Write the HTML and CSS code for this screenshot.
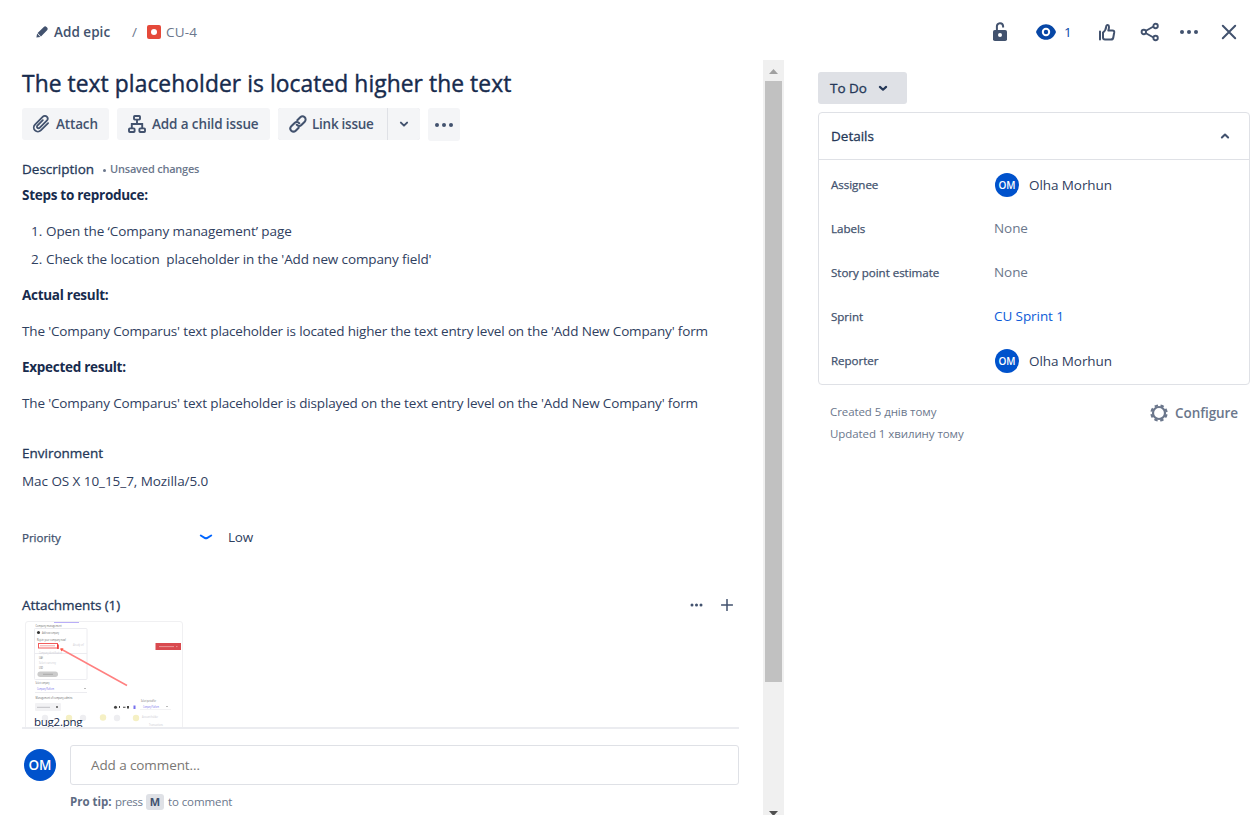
FILE: index.html
```html
<!DOCTYPE html>
<html lang="en">
<head>
<meta charset="utf-8">
<title>CU-4</title>
<link rel="stylesheet" href="styles.css">
</head>
<body>
<div class="issue">
  <header class="topbar">
    <nav class="crumbs">
      <svg class="pencil" width="12" height="12" viewBox="0 0 12 12"><path d="M.4 11.6 1.100 7.600 4.400 10.900zM1.600 7 7.800.9Q9.200-.3 10.500.9l.6.600Q12.300 2.800 11.100 4.200L5 10.400z" fill="#42526e"/></svg>
      <span class="epic">Add epic</span>
      <span class="slash">/</span>
      <span class="bug"></span>
      <span class="key">CU-4</span>
    </nav>
    <div class="actions">
      <svg class="lock" width="16" height="20" viewBox="0 0 16 20"><path d="M4.900 9V4.500a3.100 3.100 0 0 1 6.200-.4V5.600" fill="none" stroke="#42526e" stroke-width="2"/><rect x="1" y="8" width="14" height="11" rx="1.800" fill="#42526e"/><circle cx="8" cy="13" r="2" fill="#fff"/></svg>
      <svg class="eye" width="20" height="16" viewBox="0 0 20 16"><path d="M0 8C1.800 3 5.500.2 10 .2S18.200 3 20 8c-1.800 5-5.500 7.800-10 7.800S1.800 13 0 8z" fill="#0747a6"/><circle cx="10" cy="8" r="3.200" fill="none" stroke="#fff" stroke-width="2"/></svg>
      <span class="watchers">1</span>
      <svg class="thumb-up" width="18" height="18" viewBox="0 0 18 18"><path d="M2 8.500v8M5 9.500C7 8 8 6 8.200 3.500 8.300 1.500 11 1.500 11 4c0 1.400-.3 2.300-.7 3.500H14.500q2 0 1.700 2l-.9 5q-.3 2-2.300 2H7q-2 0-2-2z" fill="none" stroke="#42526e" stroke-width="2" stroke-linejoin="round" stroke-linecap="round"/></svg>
      <svg class="share" width="20" height="20" viewBox="0 0 20 20"><g fill="none" stroke="#42526e" stroke-width="1.900"><path d="m5.500 9 8-4.500M5.500 11l8 4.500"/><circle cx="3.800" cy="10" r="2.200"/><circle cx="15.600" cy="4" r="2.200"/><circle cx="15.600" cy="16" r="2.200"/></g></svg>
      <svg class="more" width="18" height="6" viewBox="0 0 18 6"><g fill="#42526e"><circle cx="2" cy="3" r="2"/><circle cx="9" cy="3" r="2"/><circle cx="16" cy="3" r="2"/></g></svg>
      <svg class="close" width="16" height="16" viewBox="0 0 16 16"><path d="m1.800 1.800 12.400 12.400m0-12.400L1.800 14.200" stroke="#42526e" stroke-width="2" stroke-linecap="round"/></svg>
    </div>
  </header>

  <div class="body">
    <main class="main">
      <h1 class="title">The text placeholder is located higher the text</h1>
      <div class="buttons">
        <div class="btn attach">
          <svg width="18" height="18" viewBox="0 0 18 18"><path d="M10.800 5.200 5.400 10.600a1.500 1.500 0 0 0 2.200 2.200L14.800 5.600a2.700 2.700 0 0 0-3.900-3.900L3 9.600a4.100 4.100 0 0 0 5.800 5.800l7.300-7.300" fill="none" stroke="#42526e" stroke-width="1.800" stroke-linecap="round"/></svg>
          <span>Attach</span>
        </div>
        <div class="btn child">
          <svg width="18" height="18" viewBox="0 0 18 18"><g fill="none" stroke="#42526e" stroke-width="1.900"><rect x="6" y="1" width="6" height="3.600" rx=".8"/><rect x="1" y="13.400" width="5.600" height="3.600" rx=".8"/><rect x="11.400" y="13.400" width="5.600" height="3.600" rx=".8"/><path d="M9 5v4M3.800 13V9h10.400v4"/></g></svg>
          <span>Add a child issue</span>
        </div>
        <div class="split">
          <div class="btn link">
            <svg width="18" height="18" viewBox="0 0 18 18"><g fill="none" stroke="#42526e" stroke-width="2" stroke-linecap="round"><path d="m8.300 5.300 3-3a3.100 3.100 0 0 1 4.400 4.400l-3.300 3.300a3.100 3.100 0 0 1-4.700-.3"/><path d="m9.700 12.700-3 3a3.100 3.100 0 0 1-4.400-4.400L5.600 8a3.100 3.100 0 0 1 4.700.3"/></g></svg>
            <span>Link issue</span>
          </div>
          <div class="btn caret"><svg width="10" height="8" viewBox="0 0 10 8"><path d="m1.900 2.600 3.100 3 3.100-3" fill="none" stroke="#42526e" stroke-width="2" stroke-linecap="round" stroke-linejoin="round"/></svg></div>
        </div>
        <div class="btn dots"><svg width="18" height="6" viewBox="0 0 18 6"><g fill="#42526e"><circle cx="2" cy="3" r="2"/><circle cx="9" cy="3" r="2"/><circle cx="16" cy="3" r="2"/></g></svg></div>
      </div>

      <div class="line desc"><span class="heading">Description</span><span class="dot"></span><span class="unsaved">Unsaved changes</span></div>
      <div class="line strong steps">Steps to reproduce:</div>
      <ol class="list">
        <li class="line"><span class="num">1.</span><span class="li1">Open the ‘Company management’ page</span></li>
        <li class="line"><span class="num">2.</span><span class="li2">Check the location&nbsp; placeholder in the 'Add new company field'</span></li>
      </ol>
      <div class="line strong block">Actual result:</div>
      <div class="line block"><span class="para">The 'Company Comparus' text placeholder is located higher the text entry level on the 'Add New Company' form</span></div>
      <div class="line strong block">Expected result:</div>
      <div class="line block"><span class="para">The 'Company Comparus' text placeholder is displayed on the text entry level on the 'Add New Company' form</span></div>
      <div class="line env"><span class="heading">Environment</span></div>
      <div class="line mac"><span>Mac OS X 10_15_7, Mozilla/5.0</span></div>
      <div class="line priority">
        <span class="label">Priority</span>
        <svg width="14" height="8" viewBox="0 0 14 8"><path d="M1.800 2.500 6 5q1 .5 2 0l4.200-2.500" fill="none" stroke="#0065ff" stroke-width="2" stroke-linecap="round"/></svg>
        <span class="low">Low</span>
      </div>
      <div class="line attachments">
        <span class="heading">Attachments (1)</span>
        <svg class="mini" width="13" height="4" viewBox="0 0 13 4"><g fill="#42526e"><circle cx="2" cy="2" r="1.500"/><circle cx="6.500" cy="2" r="1.500"/><circle cx="11" cy="2" r="1.500"/></g></svg>
        <svg width="12" height="12" viewBox="0 0 12 12"><path d="M6 .5v11M.5 6h11" stroke="#42526e" stroke-width="1.500" stroke-linecap="round"/></svg>
      </div>
      <div class="shelf">
        <div class="card">
          <svg class="preview" width="158" height="106" viewBox="25 621 158 106">
            <path d="M54 622.500h25" stroke="#b9aef8"/>
            <g fill="none" stroke="#ececf0"><rect x="34.500" y="628.500" width="52.500" height="51" rx="1"/><path d="M35 692.500h52M35 653.500h52"/></g>
            <g class="tiny">
              <text x="35.500" y="626.500" textLength="26" lengthAdjust="spacingAndGlyphs">Company management</text>
              <text x="42" y="634" textLength="17" lengthAdjust="spacingAndGlyphs">Add new company</text>
              <text x="37" y="640.500" textLength="29" lengthAdjust="spacingAndGlyphs">Rejoin your company now!</text>
              <text x="39" y="659" textLength="4" lengthAdjust="spacingAndGlyphs">UAH</text>
              <text x="39" y="669" textLength="4" lengthAdjust="spacingAndGlyphs">USD</text>
              <text x="35.500" y="684" textLength="14" lengthAdjust="spacingAndGlyphs">Select company</text>
              <text x="35.500" y="699" textLength="37" lengthAdjust="spacingAndGlyphs">Management of company admins</text>
              <text x="141" y="702" textLength="15" lengthAdjust="spacingAndGlyphs">Select period for</text>
              <g class="faint"><text x="39" y="653.500" textLength="23" lengthAdjust="spacingAndGlyphs">Company identification</text><text x="39" y="664" textLength="17" lengthAdjust="spacingAndGlyphs">Select currency</text><text x="73" y="646" textLength="11" lengthAdjust="spacingAndGlyphs">Already on?</text><text x="142" y="718" textLength="16" lengthAdjust="spacingAndGlyphs">Account holder</text><text x="149" y="726" textLength="14" lengthAdjust="spacingAndGlyphs">Transactions</text></g>
              <g class="violet"><text x="37" y="690" textLength="17" lengthAdjust="spacingAndGlyphs">Company Platform</text><text x="143" y="708" textLength="16" lengthAdjust="spacingAndGlyphs">Company Platform</text></g>
            </g>
            <circle cx="38.500" cy="632.500" r="1.500" fill="#333"/>
            <rect x="38.500" y="643.500" width="19" height="4.500" fill="#fff" stroke="#f25c5c"/>
            <path d="M40 645.800h15" stroke="#efaaaa"/>
            <path d="M58 644.500v4.500" stroke="#ee2d2d" stroke-width="1.500"/>
            <path d="m61 649 66 36.500" stroke="#ff8080" stroke-width="1.500"/><path d="m60 648.500 3.500-.2-2 3.200z" fill="#f54"/>
            <rect x="155.500" y="643" width="25.500" height="7" fill="#d94a4f"/><path d="M159 646.600h15M176 646.600h1.500" stroke="#eb9598"/>
            <rect x="37.500" y="671.500" width="20.500" height="5.500" rx="2.700" fill="#cbcbcb"/><path d="M43 674.300h10" stroke="#aaa"/>
            <rect x="35" y="703" width="26" height="8" rx="1" fill="#f2f2f4"/><path d="M37 707.300h13" stroke="#c0c0c5"/><path d="M56 707h2" stroke="#555" stroke-width="1.500"/>
            <path d="m84 688 1 1 1-1m80 18 1 1 1-1" fill="none" stroke="#bbb"/>
            <g fill="#444"><circle cx="115.500" cy="707.300" r="1.500"/><path d="M119 706h1v2h-1zm4 .7h2.500v1H123zm4-.7h2v2.500h-2z"/></g><path d="M133.500 705.500h2v3.500h-2z" fill="#7770ee"/><path d="M140 709.500h31" stroke="#f3f3f5"/>
            <g fill="#eeeef1"><circle cx="45" cy="718" r="3.200"/><circle cx="83" cy="718" r="3.200"/><circle cx="117" cy="718" r="3.200"/></g>
            <g fill="#f5f0c4"><circle cx="69" cy="718" r="3.200"/><circle cx="103" cy="717.500" r="3.200"/><circle cx="136" cy="718" r="3.200"/></g>
          </svg>
          <span class="file">bug2.png</span>
        </div>
      </div>
      <div class="comment">
        <span class="avatar big">OM</span>
        <div class="field"><span>Add a comment…</span></div>
      </div>
      <div class="tip"><b>Pro tip:</b><span class="press">press</span><kbd>M</kbd><span class="to">to comment</span></div>
    </main>

    <div class="scrollbar">
      <svg class="up" width="9" height="5" viewBox="0 0 9 5"><path d="M0 5 4.500 0 9 5z" fill="#a0a0a0"/></svg>
      <div class="handle"></div>
      <svg class="down" width="9" height="5" viewBox="0 0 9 5"><path d="M0 0h9L4.500 5z" fill="#505050"/></svg>
    </div>

    <aside class="side">
      <div class="status"><span>To Do</span><svg width="10" height="8" viewBox="0 0 10 8"><path d="m1.900 2.900 3.100 2.800 3.100-2.800" fill="none" stroke="#253858" stroke-width="2.200" stroke-linecap="round" stroke-linejoin="round"/></svg></div>
      <section class="panel">
        <div class="panel-head"><span class="heading">Details</span><svg width="10" height="8" viewBox="0 0 10 8"><path d="m1.900 5.500 3.100-2.900 3.100 2.900" fill="none" stroke="#42526e" stroke-width="2.100" stroke-linecap="round" stroke-linejoin="round"/></svg></div>
        <div class="row"><span class="label">Assignee</span><span class="avatar">OM</span><span class="name">Olha Morhun</span></div>
        <div class="row"><span class="label">Labels</span><span class="none">None</span></div>
        <div class="row"><span class="label">Story point estimate</span><span class="none">None</span></div>
        <div class="row"><span class="label">Sprint</span><span class="sprint">CU Sprint 1</span></div>
        <div class="row"><span class="label">Reporter</span><span class="avatar">OM</span><span class="name">Olha Morhun</span></div>
      </section>
      <div class="foot">
        <div class="dates"><div><span>Created 5 днів тому</span></div><div><span>Updated 1 хвилину тому</span></div></div>
        <div class="configure">
          <svg width="18" height="18" viewBox="0 0 18 18"><circle cx="9" cy="9" r="6" fill="none" stroke="#6b778c" stroke-width="2.200"/><circle cx="9" cy="9" r="7.600" fill="none" stroke="#6b778c" stroke-width="2.200" stroke-dasharray="3.400 2.569" stroke-dashoffset="-1.300"/></svg>
          <span>Configure</span>
        </div>
      </div>
    </aside>
  </div>
</div>
</body>
</html>
```

FILE: styles.css
```css
* { box-sizing: border-box; }
body { margin: 0; background: #fff; color: #2f4060; font: 13.5px/24px "Open Sans", "Noto Sans", sans-serif; overflow: hidden; }
svg { display: block; flex: none; }
span { white-space: nowrap; }
.issue { width: 1258px; height: 815px; display: flex; flex-direction: column; overflow: hidden; }

.topbar { height: 60px; flex: none; display: flex; justify-content: space-between; padding: 20px 21px 0 36px; }
.crumbs, .actions { display: flex; align-items: center; height: 24px; }
.epic { margin-left: 6px; width: 78px; font-weight: 600; color: #42526e; letter-spacing: .03px; }
.slash { color: #6b778c; width: 15px; }
.bug { width: 14px; height: 14px; border-radius: 2px; background: #e5493a; display: grid; place-items: center; }
.bug::after { content: ""; width: 6px; height: 6px; border-radius: 50%; background: #fff; }
.key { margin-left: 5px; color: #6b778c; letter-spacing: .2px; }
.lock { margin-right: 28px; }
.watchers { color: #0747a6; margin: 0 27px 0 8px; width: 7px; }
.thumb-up { margin-right: 24px; }
.share { margin-right: 20px; }
.more { margin-right: 23px; }

.body { flex: 1; min-height: 0; display: flex; }
.main { width: 763px; flex: none; padding: 12px 24px 0 22px; display: flex; flex-direction: column; }
.title { margin: 0 0 12px; font-size: 22.8px; font-weight: 400; -webkit-text-stroke: .4px #172b4d; line-height: 24px; color: #172b4d; letter-spacing: .07px; white-space: nowrap; }
.buttons { display: flex; gap: 8px; height: 32px; }
.btn { height: 32px; display: flex; align-items: center; background: #f4f5f7; border-radius: 3px; font-weight: 600; color: #42526e; }
.attach { width: 87px; padding-left: 10px; gap: 6px; letter-spacing: -.15px; }
.child { width: 153px; padding-left: 11px; gap: 6px; letter-spacing: -.12px; }
.split { display: flex; gap: 1px; background: #dfe1e6; border-radius: 3px; }
.link { width: 109px; padding-left: 11px; gap: 5px; border-radius: 3px 0 0 3px; letter-spacing: -.26px; }
.caret { width: 32px; justify-content: center; border-radius: 0 3px 3px 0; }
.dots { width: 32px; height: 33px; justify-content: center; }

.line { height: 24px; flex: none; display: flex; align-items: center; }
.heading { -webkit-text-stroke: .3px #253858; color: #253858; }
.desc { margin-top: 17px; }
.dot { width: 3px; height: 3px; border-radius: 50%; background: #6b778c; margin: 2px 4px 0 9px; }
.unsaved { font-size: 11px; font-weight: 600; color: #6b778c; letter-spacing: -.22px; }
.strong { font-weight: 700; color: #172b4d; letter-spacing: -.28px; }
.steps { margin-top: 2px; }
.list { margin: 12px 0 0; padding: 0 0 0 9px; display: flex; flex-direction: column; gap: 4px; }
.num { width: 15px; }
.li1 { letter-spacing: -.08px; }
.li2 { letter-spacing: -.12px; }
.para { letter-spacing: -.153px; }
.block { margin-top: 12px; }
.env { margin-top: 26px; }
.mac { margin-top: 4px; letter-spacing: -.06px; }
.priority { margin-top: 32px; }
.label { font-size: 11.6px; -webkit-text-stroke: .25px #42526e; color: #42526e; letter-spacing: -.05px; }
.priority .label { width: 177px; padding-top: 1px; }
.low { margin-left: 15px; letter-spacing: -.2px; }
.attachments { margin-top: 44px; padding-right: 6px; }
.attachments .heading { flex: 1; letter-spacing: -.07px; }
.mini { margin-right: 18px; }
.shelf { height: 112px; flex: none; overflow: hidden; border-bottom: 2px solid #ebecf0; padding: 4px 0 0 3px; }
.card { position: relative; width: 158px; height: 120px; border: 1px solid #f0f0f2; border-radius: 3px; overflow: hidden; }
.preview { margin: -1px; }
.tiny { font: 3px "Open Sans", sans-serif; fill: #666; }
.faint { fill: #c9c9d0; }
.violet { fill: #6a60ea; }
.file { position: absolute; left: 8px; top: 88px; font-size: 11.5px; color: #172b4d; letter-spacing: -.25px; }
.comment { margin-top: 16px; display: flex; align-items: center; height: 40px; padding-left: 2px; gap: 14px; flex: none; }
.avatar { width: 24px; height: 24px; border-radius: 50%; background: #0052cc; color: #fff; display: flex; justify-content: center; align-items: center; font-size: 10px; font-weight: 600; }
.big { width: 32px; height: 32px; font-size: 13.5px; }
.field { flex: 1; height: 40px; border: 1px solid #dfe1e6; border-radius: 3px; padding: 7px 20px; color: #7a7774; letter-spacing: -.1px; }
.tip { display: flex; align-items: center; margin: 7px 0 0 48px; height: 20px; font-size: 11.5px; line-height: 20px; color: #6b778c; }
.tip b { color: #5e6c84; width: 45px; white-space: nowrap; }
.press { width: 31px; letter-spacing: -.3px; }
kbd { width: 18px; height: 16px; background: #dfe1e6; border-radius: 3px; font: 700 11px/16px "Open Sans", sans-serif; color: #42526e; text-align: center; }
.to { margin-left: 4px; letter-spacing: -.1px; }

.scrollbar { width: 21px; flex: none; height: 757px; background: #f0f0f0; display: flex; flex-direction: column; align-items: center; padding-top: 9px; }
.handle { width: 17px; height: 601px; flex: none; margin: 7px 0 129px; background: #c1c1c1; }

.side { width: 432px; margin-left: 34px; padding-top: 12px; }
.status { width: 89px; height: 32px; border-radius: 3px; background: #dfe1e6; display: flex; align-items: center; padding: 0 19px 0 12px; justify-content: space-between; -webkit-text-stroke: .3px #253858; color: #253858; }
.status svg, .panel-head svg { -webkit-text-stroke: 0; }
.panel { margin-top: 8px; height: 273px; border: 1px solid #dfe1e6; border-radius: 4px; }
.panel-head { height: 47px; border-bottom: 1px solid #dfe1e6; padding: 0 19px 0 12px; display: flex; align-items: center; justify-content: space-between; margin-bottom: 3px; }
.row { height: 44px; display: flex; align-items: center; padding-left: 12px; }
.row .label { width: 163px; }
.row .avatar { margin-left: 1px; }
.name { margin-left: 10px; letter-spacing: -.08px; }
.none, .sprint { padding-bottom: 2px; letter-spacing: -.08px; }
.none { color: #6b778c; }
.sprint { color: #0c5bd8; }
.foot { display: flex; justify-content: space-between; padding: 16px 12px 0; }
.dates { font-size: 11.5px; line-height: 22px; color: #6b778c; letter-spacing: -.08px; }
.configure { display: flex; align-items: center; gap: 7px; height: 24px; font-weight: 600; color: #6b778c; letter-spacing: -.08px; }
```
